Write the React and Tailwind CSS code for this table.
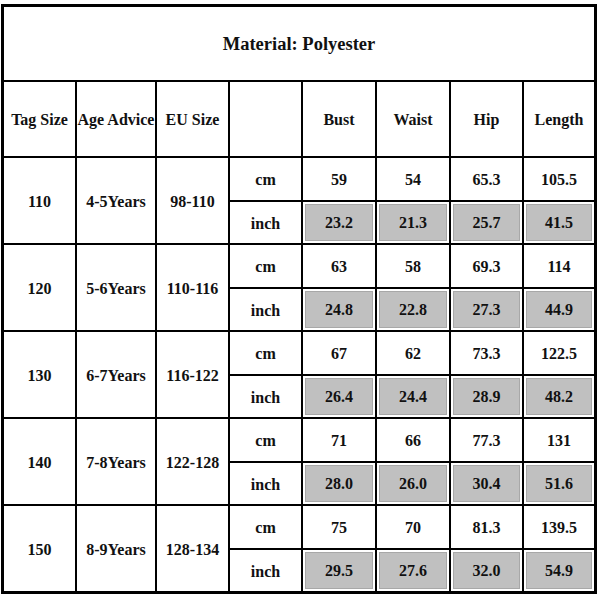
import React from "react";

const groups = [
  { tag: "110", age: "4-5Years", eu: "98-110", cm: ["59", "54", "65.3", "105.5"], inch: ["23.2", "21.3", "25.7", "41.5"] },
  { tag: "120", age: "5-6Years", eu: "110-116", cm: ["63", "58", "69.3", "114"], inch: ["24.8", "22.8", "27.3", "44.9"] },
  { tag: "130", age: "6-7Years", eu: "116-122", cm: ["67", "62", "73.3", "122.5"], inch: ["26.4", "24.4", "28.9", "48.2"] },
  { tag: "140", age: "7-8Years", eu: "122-128", cm: ["71", "66", "77.3", "131"], inch: ["28.0", "26.0", "30.4", "51.6"] },
  { tag: "150", age: "8-9Years", eu: "128-134", cm: ["75", "70", "81.3", "139.5"], inch: ["29.5", "27.6", "32.0", "54.9"] },
];

const cell = "bg-white flex items-center justify-center pt-[2px]";

export default function App() {
  const items = [];
  items.push(
    <div key="title" className={`${cell} col-span-8 text-[18.5px]`}>
      Material: Polyester
    </div>
  );
  ["Tag Size", "Age Advice", "EU Size", "", "Bust", "Waist", "Hip", "Length"].forEach((h, i) => {
    items.push(
      <div key={"h" + i} className={`${cell} whitespace-nowrap`}>
        {h}
      </div>
    );
  });
  groups.forEach((g, gi) => {
    items.push(
      <div key={"t" + gi} className={`${cell} row-span-2`}>{g.tag}</div>,
      <div key={"a" + gi} className={`${cell} row-span-2`}>{g.age}</div>,
      <div key={"e" + gi} className={`${cell} row-span-2`}>{g.eu}</div>,
      <div key={"cm" + gi} className={cell}>cm</div>
    );
    g.cm.forEach((v, vi) => {
      items.push(
        <div key={"c" + gi + vi} className={cell}>{v}</div>
      );
    });
    items.push(<div key={"in" + gi} className={cell}>inch</div>);
    g.inch.forEach((v, vi) => {
      items.push(
        <div key={"i" + gi + vi} className="bg-white p-[2px] flex">
          <div className="flex-1 bg-[#c0c0c0] border border-[#a8a8a8] flex items-center justify-center pt-[1px]">
            {v}
          </div>
        </div>
      );
    });
  });

  return (
    <div className="w-[600px] h-[600px] bg-white overflow-hidden">
      <div
        className="ml-[1px] mt-[4px] w-[596px] h-[590px] bg-black p-[3px] grid gap-[2px] grid-cols-[71px_78px_71px_71px_72px_72px_71px_70px] grid-rows-[73px_74px_42px_41px_42px_41px_42px_41px_42px_41px_42px_41px] text-[16px] font-bold text-[#111]"
        style={{ fontFamily: '"Liberation Serif", "Times New Roman", serif' }}
      >
        {items}
      </div>
    </div>
  );
}
